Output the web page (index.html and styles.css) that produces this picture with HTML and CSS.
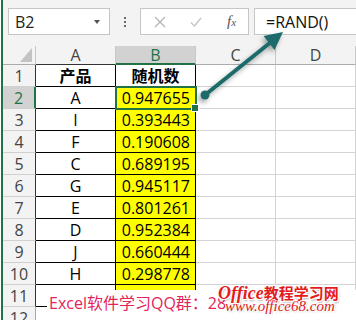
FILE: index.html
```html
<!DOCTYPE html>
<html lang="zh">
<head>
<meta charset="utf-8">
<title>RAND</title>
<link rel="stylesheet" href="styles.css">
</head>
<body>
<div class="app">
  <div class="fbar">
    <div class="namebox"><span>B2</span><span class="caret"></span></div>
    <div class="vdots"><i></i><i></i><i></i></div>
    <div class="btnbox">
      <svg class="ic-x" width="12" height="12" viewBox="0 0 12 12"><path d="M1 1L11 11M11 1L1 11" stroke="#b4b4b4" stroke-width="1.3" fill="none"/></svg>
      <svg class="ic-ok" width="12" height="12" viewBox="0 0 12 12"><path d="M1 6.5L4.5 10L11 2" stroke="#c4c4c4" stroke-width="1.4" fill="none"/></svg>
      <span class="fx">f<small>x</small></span>
    </div>
    <div class="fbox">=RAND()</div>
  </div>
  <div class="grid">
    <div class="c ch corner"><svg width="12" height="14" viewBox="0 0 12 14"><polygon points="12,0 12,14 0,14" fill="#c3c3c3"/></svg></div>
    <div class="c ch ta">A</div>
    <div class="c ch ta sel">B</div>
    <div class="c ch">C</div>
    <div class="c ch">D</div>

    <div class="c rh ta">1</div><div class="c t b">产品</div><div class="c t b">随机数</div><div class="c"></div><div class="c"></div>
    <div class="c rh ta sel">2</div><div class="c t">A</div><div class="c t y n cur">0.947655</div><div class="c"></div><div class="c"></div>
    <div class="c rh ta">3</div><div class="c t">I</div><div class="c t y n">0.393443</div><div class="c"></div><div class="c"></div>
    <div class="c rh ta">4</div><div class="c t">F</div><div class="c t y n">0.190608</div><div class="c"></div><div class="c"></div>
    <div class="c rh ta">5</div><div class="c t">C</div><div class="c t y n">0.689195</div><div class="c"></div><div class="c"></div>
    <div class="c rh ta">6</div><div class="c t">G</div><div class="c t y n">0.945117</div><div class="c"></div><div class="c"></div>
    <div class="c rh ta">7</div><div class="c t">E</div><div class="c t y n">0.801261</div><div class="c"></div><div class="c"></div>
    <div class="c rh ta">8</div><div class="c t">D</div><div class="c t y n">0.952384</div><div class="c"></div><div class="c"></div>
    <div class="c rh ta">9</div><div class="c t">J</div><div class="c t y n">0.660444</div><div class="c"></div><div class="c"></div>
    <div class="c rh ta">10</div><div class="c t">H</div><div class="c t y n">0.298778</div><div class="c"></div><div class="c"></div>
    <div class="c rh ta">11</div><div class="c t">B</div><div class="c t y n">0.517264</div><div class="c"></div><div class="c"></div>
    <div class="c rh">12</div><div class="c"></div><div class="c"></div><div class="c"></div><div class="c"></div>
  </div>
</div>
<svg class="arrow" width="356" height="320" viewBox="0 0 356 320">
  <defs>
    <filter id="sh" x="-20%" y="-20%" width="140%" height="140%">
      <feDropShadow dx="-2" dy="3" stdDeviation="2.5" flood-color="#000" flood-opacity="0.35"/>
    </filter>
  </defs>
  <g filter="url(#sh)" fill="#1f6b6b" stroke="#1f6b6b">
    <line x1="205" y1="95" x2="271" y2="42" stroke-width="4"/>
    <circle cx="205" cy="95" r="4.5" stroke="none"/>
    <polygon points="283,32 274.5,50 263.5,36" stroke="none"/>
  </g>
</svg>
<div class="wm">
  <span class="wm-qq">Excel软件学习QQ群：28</span>
  <div class="wm-logo"><span class="of">Office</span>教程学习网</div>
  <div class="wm-url">www.office68.com</div>
</div>
</body>
</html>
```
FILE: styles.css
```css
* { box-sizing: border-box; margin: 0; padding: 0; }
html, body { width: 356px; height: 320px; overflow: hidden; background: #fff; }
body { position: relative; font-family: "Open Sans", "Noto Sans CJK SC", sans-serif; color: #000; }

.app {
  width: 355px; height: 320px; margin-left: 1px;
  border-left: 2px solid #217346;
  background: #f3f3f3; overflow: hidden;
}

.fbar { display: flex; align-items: flex-start; height: 46px; padding: 8px 0 0 5px; }
.namebox {
  width: 102px; height: 27px; flex: none; background: #fff; border: 1px solid #c6c6c6;
  display: flex; align-items: center; justify-content: space-between;
  padding: 0 9px 0 6px; font-size: 16px; color: #222;
}
.caret { width: 0; height: 0; border-left: 3.5px solid transparent; border-right: 3.5px solid transparent; border-top: 4px solid #555; }
.vdots { width: 30px; height: 27px; flex: none; display: flex; flex-direction: column; align-items: center; justify-content: center; gap: 2px; }
.vdots i { display: block; width: 2px; height: 2px; background: #6a6a6a; }
.btnbox {
  width: 109px; height: 27px; flex: none; background: #fff; border: 1px solid #c6c6c6;
  display: flex; align-items: center; padding-left: 13px;
}
.ic-x { margin-right: 24px; }
.ic-ok { margin-right: 25px; }
.fx { font-family: "Liberation Serif", serif; font-style: italic; font-size: 15px; color: #555; }
.fx small { font-size: 11px; }
.fbox {
  flex: 1; margin-left: 5px; height: 27px; background: #fff; border: 1px solid #c6c6c6; border-right: none;
  display: flex; align-items: center; padding-left: 11px; font-size: 16px; color: #111;
}

.grid {
  display: grid; grid-template-columns: 33px 80px 80px 80px 80px;
  grid-template-rows: 19px; grid-auto-rows: 22px; background: #fff;
}
.c {
  border-right: 1px solid #d4d4d4; border-bottom: 1px solid #d4d4d4;
  display: flex; align-items: center; justify-content: center;
  font-size: 16px; line-height: 1; position: relative; white-space: nowrap;
}
.ch { background: #f3f3f3; color: #444; border-right-color: #c8c8c8; border-bottom-color: #ababab; }
.ch.ta { border-bottom-color: #333; }
.ch.sel { background: #d2d2d2; color: #217346; border-bottom: 2px solid #217346; }
.corner { justify-content: flex-end; align-items: flex-end; padding: 0 3px 2px 0; }
.corner svg { display: block; }
.rh { background: #f3f3f3; color: #444; border-right-color: #ababab; border-bottom-color: #d0d0d0; }
.rh.ta { border-right-color: #333; }
.rh.sel { background: #d2d2d2; color: #217346; border-right: 2px solid #217346; }
.t { border-right-color: #000; border-bottom-color: #000; }
.b { font-weight: 700; }
.y { background: #ffff00; }
.n { justify-content: flex-end; padding-right: 5px; }
.cur { z-index: 2; }
.cur::before {
  content: ""; position: absolute; left: -1px; top: -1px; right: -2px; bottom: -2px;
  border: 2px solid #217346;
}
.cur::after {
  content: ""; position: absolute; right: -4px; bottom: -4px; width: 6px; height: 6px;
  background: #217346; border: 1px solid #fff;
}

.arrow { position: absolute; left: 0; top: 0; pointer-events: none; z-index: 5; }

.wm { position: absolute; left: 47px; top: 290px; right: 0; bottom: 0; background: #fff; z-index: 6; }
.wm-qq { position: absolute; left: 2px; top: 3px; font-size: 16px; line-height: 20px; color: #e3245a; white-space: nowrap; }
.wm-logo {
  position: absolute; left: 171px; top: -6px; font-size: 15px; line-height: 18px; font-weight: 700;
  color: #e31c1c; white-space: nowrap;
  text-shadow: 1px 1px 0 #fff, -1px -1px 0 #fff, 1px -1px 0 #fff, -1px 1px 0 #fff, 1px 2px 2px rgba(0,0,0,.35);
}
.wm-logo .of { font-family: "Liberation Serif", serif; font-style: italic; font-size: 18px; }
.wm-url {
  position: absolute; left: 178px; top: 7px; font-family: "Liberation Serif", serif; font-style: italic;
  font-size: 15px; line-height: 18px; color: #e11d1d; white-space: nowrap;
  text-shadow: 1px 1px 0 #fff, -1px -1px 0 #fff, 1px 1px 2px rgba(0,0,0,.3);
}
```
